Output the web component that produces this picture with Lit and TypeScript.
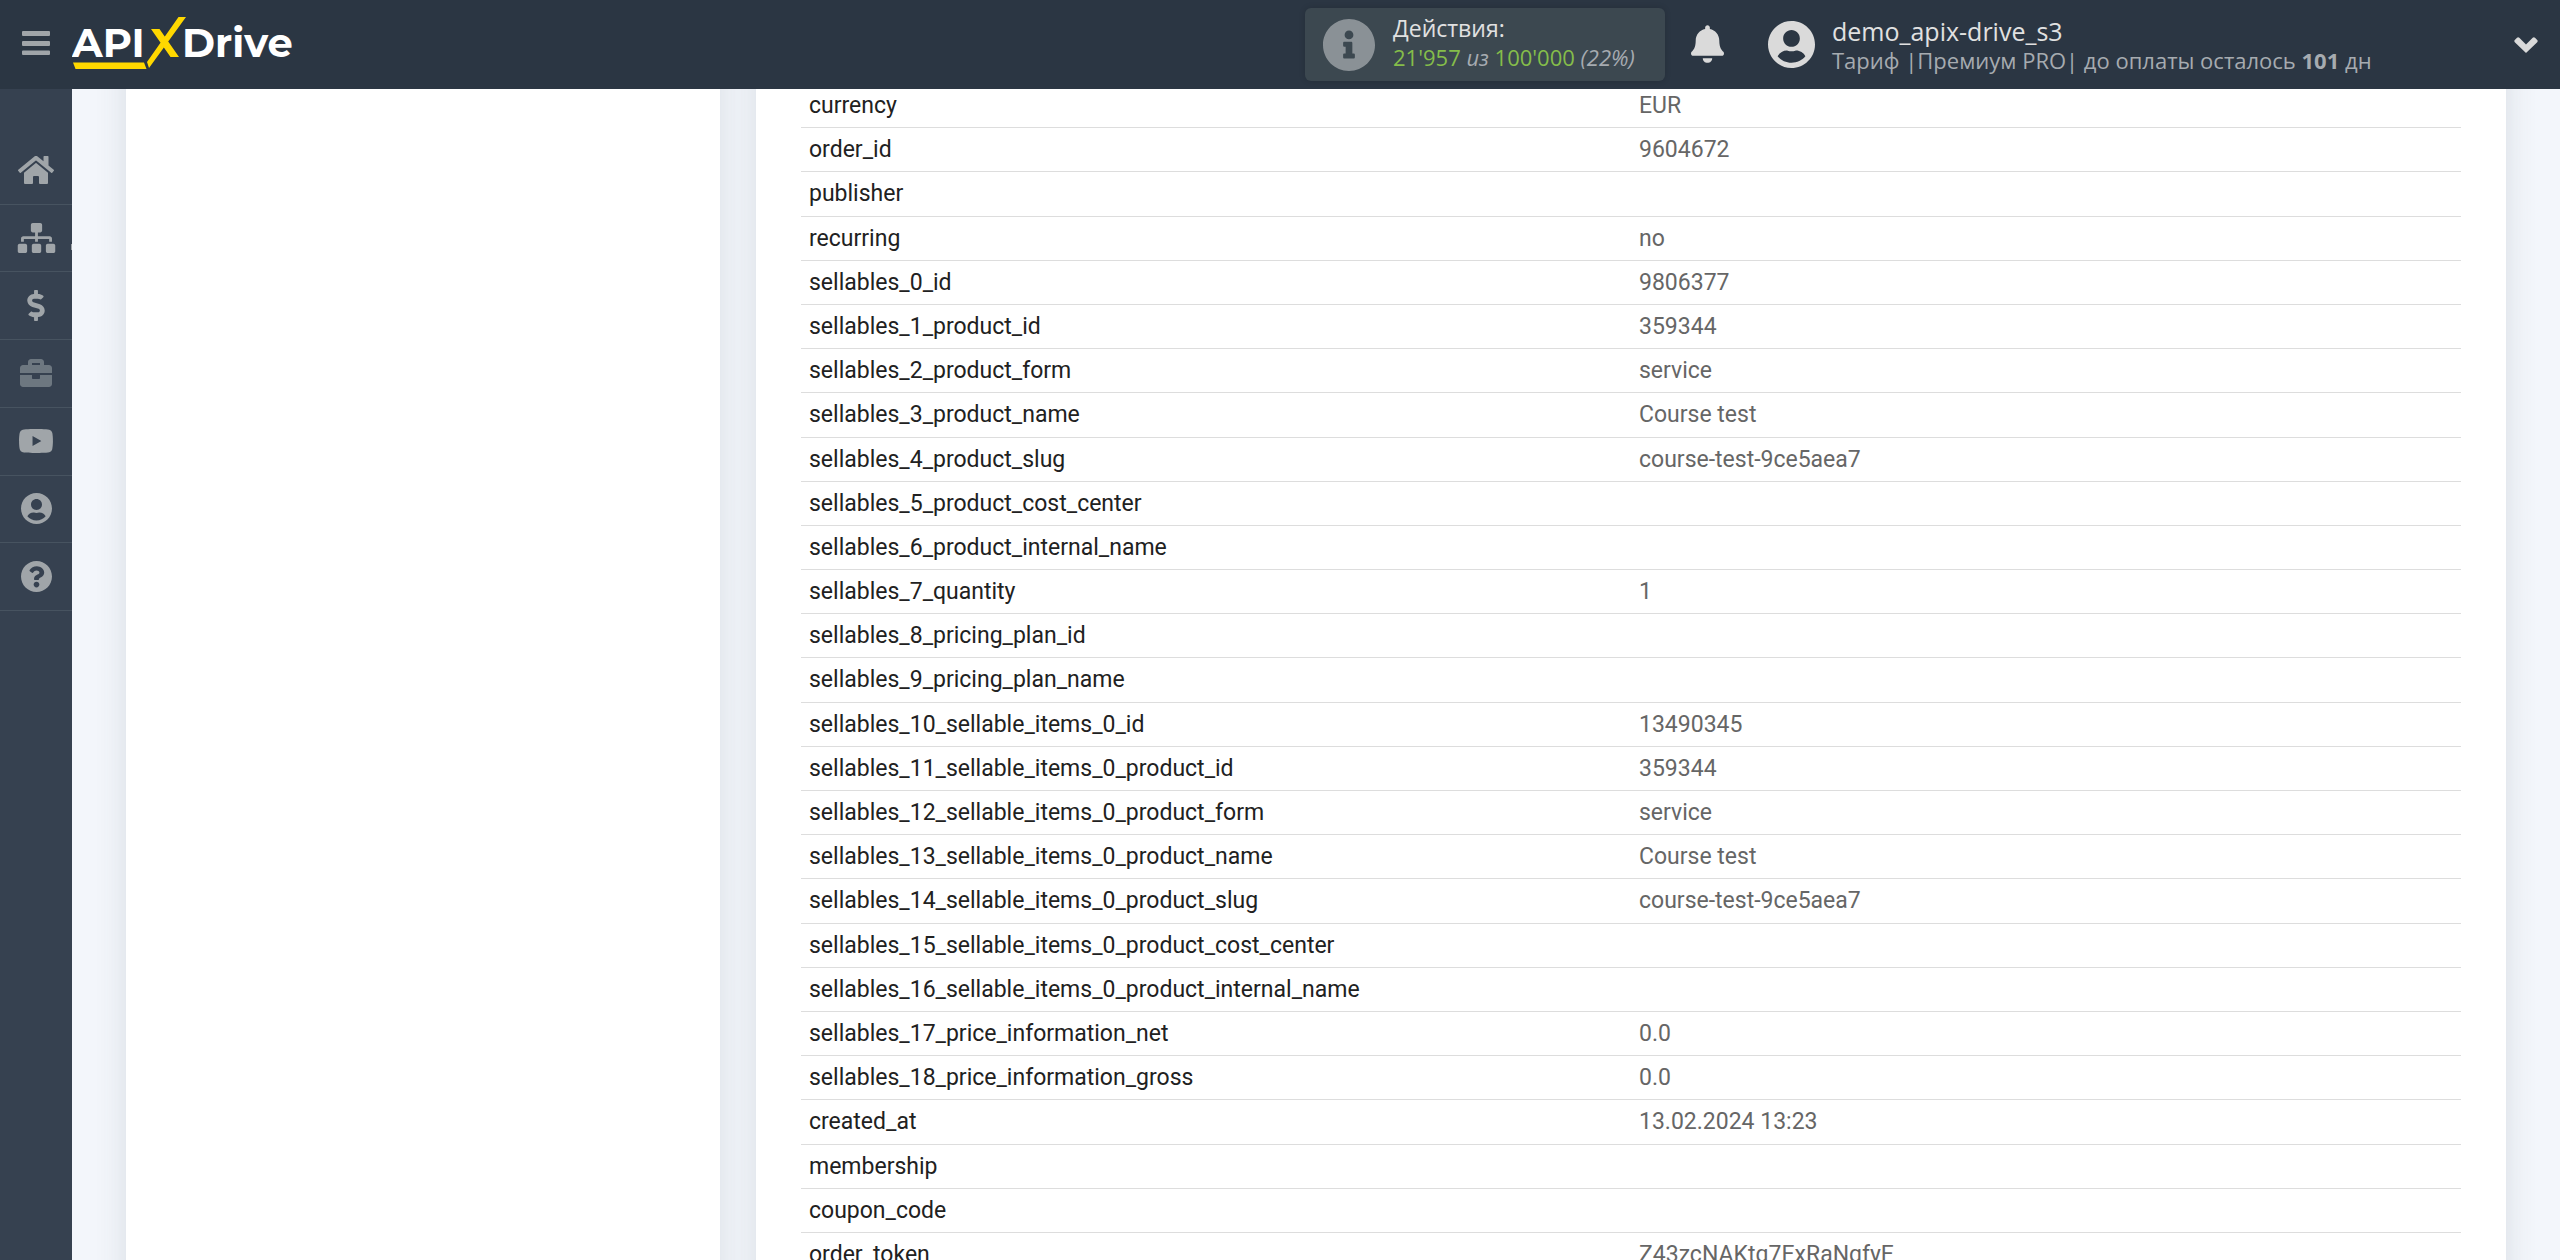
import { LitElement, html, css, svg } from "lit";
import { customElement } from "lit/decorators.js";

type Icon = { box: string; path: string };

const ICONS: Record<string, Icon> = {
  bars: {
    box: "0 0 28 24",
    path: "M1 0h26a1 1 0 0 1 1 1v3a1 1 0 0 1-1 1H1a1 1 0 0 1-1-1V1a1 1 0 0 1 1-1zM1 10h26a1 1 0 0 1 1 1v3a1 1 0 0 1-1 1H1a1 1 0 0 1-1-1v-3a1 1 0 0 1 1-1zM1 19.5h26a1 1 0 0 1 1 1v2.500a1 1 0 0 1-1 1H1a1 1 0 0 1-1-1v-2.500a1 1 0 0 1 1-1z",
  },
  info: {
    box: "8 8 496 496",
    path: "M256 8C119.043 8 8 119.083 8 256c0 136.997 111.043 248 248 248s248-111.003 248-248C504 119.083 392.957 8 256 8zm0 110c23.196 0 42 18.804 42 42s-18.804 42-42 42-42-18.804-42-42 18.804-42 42-42zm56 254c0 6.627-5.373 12-12 12h-88c-6.627 0-12-5.373-12-12v-24c0-6.627 5.373-12 12-12h12v-64h-12c-6.627 0-12-5.373-12-12v-24c0-6.627 5.373-12 12-12h64c6.627 0 12 5.373 12 12v100h12c6.627 0 12 5.373 12 12v24z",
  },
  bell: {
    box: "0 0 448 512",
    path: "M224 512c35.32 0 63.97-28.65 63.97-64H160.03c0 35.35 28.65 64 63.97 64zm215.39-149.71c-19.32-20.76-55.47-51.99-55.47-154.29 0-77.7-54.48-139.9-127.94-155.16V32c0-17.67-14.32-32-31.98-32s-31.98 14.33-31.98 32v20.84C118.56 68.1 64.08 130.3 64.08 208c0 102.3-36.15 133.53-55.47 154.29-6 6.45-8.66 14.16-8.61 21.71.11 16.4 12.98 32 32.1 32h383.8c19.12 0 32-15.6 32.1-32 .05-7.55-2.61-15.27-8.61-21.71z",
  },
  user: {
    box: "0 8 496 496",
    path: "M248 8C111 8 0 119 0 256s111 248 248 248 248-111 248-248S385 8 248 8zm0 96c48.6 0 88 39.4 88 88s-39.4 88-88 88-88-39.4-88-88 39.4-88 88-88zm0 344c-58.7 0-111.3-26.6-146.5-68.2 18.8-35.4 55.6-59.8 98.5-59.8 2.4 0 4.8.4 7.1 1.1 13 4.2 26.6 6.9 40.9 6.9 14.3 0 28-2.7 40.9-6.9 2.3-.7 4.700-1.100 7.100-1.100 42.900 0 79.700 24.400 98.500 59.800C359.300 421.400 306.700 448 248 448z",
  },
  chevron: {
    box: "0 0 24 16",
    path: "M12 16L.8 5.200a1.600 1.600 0 0 1 0-2.200L3 .8a1.600 1.600 0 0 1 2.300 0L12 7.500 18.700.8a1.600 1.600 0 0 1 2.300 0L23.200 3a1.600 1.600 0 0 1 0 2.200z",
  },
  home: {
    box: "0 32 576 448",
    path: "M280.37 148.26L96 300.11V464a16 16 0 0 0 16 16l112.06-.29a16 16 0 0 0 15.92-16V368a16 16 0 0 1 16-16h64a16 16 0 0 1 16 16v95.64a16 16 0 0 0 16 16.05L464 480a16 16 0 0 0 16-16V300L295.67 148.26a12.19 12.19 0 0 0-15.3 0zM571.6 251.47L488 182.56V44.05a12 12 0 0 0-12-12h-56a12 12 0 0 0-12 12v72.61L318.47 43a48 48 0 0 0-61 0L4.34 251.47a12 12 0 0 0-1.6 16.9l25.5 31A12 12 0 0 0 45.15 301l235.22-193.74a12.19 12.19 0 0 1 15.3 0L530.9 301a12 12 0 0 0 16.9-1.6l25.5-31a12 12 0 0 0-1.7-16.93z",
  },
  sitemap: {
    box: "0 0 640 512",
    path: "M128 352H32c-17.67 0-32 14.33-32 32v96c0 17.67 14.33 32 32 32h96c17.67 0 32-14.33 32-32v-96c0-17.67-14.33-32-32-32zm-24-80h192v48h48v-48h192v48h48v-57.59c0-21.17-17.23-38.41-38.41-38.41H344v-64h40c17.67 0 32-14.33 32-32V32c0-17.67-14.33-32-32-32H256c-17.67 0-32 14.33-32 32v96c0 17.67 14.33 32 32 32h40v64H94.41C73.23 224 56 241.23 56 262.41V320h48v-48zm264 80h-96c-17.67 0-32 14.33-32 32v96c0 17.67 14.33 32 32 32h96c17.67 0 32-14.33 32-32v-96c0-17.67-14.33-32-32-32zm240 0h-96c-17.67 0-32 14.33-32 32v96c0 17.67 14.33 32 32 32h96c17.67 0 32-14.33 32-32v-96c0-17.67-14.33-32-32-32z",
  },
  dollar: {
    box: "0 0 288 512",
    path: "M209.2 233.4l-108-31.6C88.7 198.2 80 186.5 80 173.5c0-16.3 13.2-29.5 29.5-29.5h66.3c12.2 0 24.2 3.7 34.2 10.5 6.1 4.1 14.3 3.1 19.5-2l34.8-34c7.1-6.9 6.1-18.4-1.8-24.5C238 74.8 207.4 64.1 176 64V16c0-8.8-7.2-16-16-16h-32c-8.8 0-16 7.2-16 16v48h-2.5C45.8 64-5.4 118.7.5 183.6c4.2 46.1 39.4 83.6 83.8 96.6l102.5 30c12.5 3.7 21.2 15.3 21.2 28.3 0 16.3-13.2 29.5-29.5 29.5h-66.3C100 368 88 364.3 78 357.5c-6.1-4.1-14.3-3.1-19.5 2l-34.8 34c-7.1 6.9-6.1 18.4 1.8 24.5 24.5 19.2 55.1 29.9 86.5 30v48c0 8.8 7.2 16 16 16h32c8.8 0 16-7.2 16-16v-48.2c46.6-.9 90.3-28.6 105.7-72.7 21.5-61.6-14.6-124.8-72.5-141.7z",
  },
  briefcase: {
    box: "0 32 512 448",
    path: "M320 336c0 8.84-7.16 16-16 16h-96c-8.84 0-16-7.16-16-16v-48H0v144c0 25.6 22.4 48 48 48h416c25.6 0 48-22.4 48-48V288H320v48zm144-208h-80V80c0-25.6-22.4-48-48-48H176c-25.6 0-48 22.4-48 48v48H48c-25.6 0-48 22.4-48 48v80h512v-80c0-25.6-22.4-48-48-48zm-144 0H192V96h128v32z",
  },
  video: {
    box: "14 64 548 384",
    path: "M549.655 124.083c-6.281-23.65-24.787-42.276-48.284-48.597C458.781 64 288 64 288 64S117.22 64 74.629 75.486c-23.497 6.322-42.003 24.947-48.284 48.597-11.412 42.867-11.412 132.305-11.412 132.305s0 89.438 11.412 132.305c6.281 23.65 24.787 41.5 48.284 47.821C117.22 448 288 448 288 448s170.78 0 213.371-11.486c23.497-6.321 42.003-24.171 48.284-47.821 11.412-42.867 11.412-132.305 11.412-132.305s0-89.438-11.412-132.305zm-317.51 213.508V175.185l142.739 81.205-142.739 81.201z",
  },
  question: {
    box: "8 8 496 496",
    path: "M504 256c0 136.997-111.043 248-248 248S8 392.997 8 256C8 119.083 119.043 8 256 8s248 111.083 248 248zM262.655 90c-54.497 0-89.255 22.957-116.549 63.758-3.536 5.286-2.353 12.415 2.715 16.258l34.699 26.31c5.205 3.947 12.621 3.008 16.665-2.122 17.864-22.658 30.113-35.797 57.303-35.797 20.429 0 45.698 13.148 45.698 32.958 0 14.976-12.363 22.667-32.534 33.976C247.128 238.528 216 254.941 216 296v4c0 6.627 5.373 12 12 12h56c6.627 0 12-5.373 12-12v-1.333c0-28.462 83.186-29.647 83.186-106.667 0-58.002-60.165-102-116.531-102zM256 338c-25.365 0-46 20.635-46 46 0 25.364 20.635 46 46 46s46-20.636 46-46c0-25.365-20.635-46-46-46z",
  },
};

const icon = (name: string, width: number, height: number) => html`
  <svg class="icon" viewBox=${ICONS[name].box} width=${width} height=${height} aria-hidden="true">
    ${svg`<path d=${ICONS[name].path}></path>`}
  </svg>
`;

const MENU = [
  { icon: "home", label: "Главная", width: 36, height: 28 },
  { icon: "sitemap", label: "Связи", width: 39, height: 30, mark: true },
  { icon: "dollar", label: "Оплата", width: 18, height: 31 },
  { icon: "briefcase", label: "Услуги", width: 32, height: 28, dim: true },
  { icon: "video", label: "Видео", width: 34, height: 24 },
  { icon: "user", label: "Профиль", width: 31, height: 31 },
  { icon: "question", label: "Помощь", width: 31, height: 31 },
];

const FIELDS: [string, string][] = [
  ["currency", "EUR"],
  ["order_id", "9604672"],
  ["publisher", ""],
  ["recurring", "no"],
  ["sellables_0_id", "9806377"],
  ["sellables_1_product_id", "359344"],
  ["sellables_2_product_form", "service"],
  ["sellables_3_product_name", "Course test"],
  ["sellables_4_product_slug", "course-test-9ce5aea7"],
  ["sellables_5_product_cost_center", ""],
  ["sellables_6_product_internal_name", ""],
  ["sellables_7_quantity", "1"],
  ["sellables_8_pricing_plan_id", ""],
  ["sellables_9_pricing_plan_name", ""],
  ["sellables_10_sellable_items_0_id", "13490345"],
  ["sellables_11_sellable_items_0_product_id", "359344"],
  ["sellables_12_sellable_items_0_product_form", "service"],
  ["sellables_13_sellable_items_0_product_name", "Course test"],
  ["sellables_14_sellable_items_0_product_slug", "course-test-9ce5aea7"],
  ["sellables_15_sellable_items_0_product_cost_center", ""],
  ["sellables_16_sellable_items_0_product_internal_name", ""],
  ["sellables_17_price_information_net", "0.0"],
  ["sellables_18_price_information_gross", "0.0"],
  ["created_at", "13.02.2024 13:23"],
  ["membership", ""],
  ["coupon_code", ""],
  ["order_token", "Z43zcNAKtq7ExRaNgfyE"],
];

@customElement("app-header")
export class AppHeader extends LitElement {
  static styles = css`
    :host {
      display: grid;
      grid-template-columns: 1305fr 1255fr;
      align-items: center;
      height: 89px;
      background: #2b3643;
      font-family: "Open Sans", "Noto Sans", sans-serif;
      color: #e1e1e1;
    }
    .icon {
      display: block;
      fill: currentColor;
      flex: none;
    }
    button {
      display: block;
      padding: 0;
      border: 0;
      background: none;
      color: #dadada;
      cursor: pointer;
    }
    .brand,
    .tools {
      display: flex;
      align-items: center;
    }
    .brand {
      gap: 22px;
      padding: 0 0 4px 22px;
    }
    .brand .toggle {
      color: #a0a5a9;
    }
    .logo {
      display: block;
    }
    .word {
      font-family: "Montserrat", "Inter", sans-serif;
      font-weight: 700;
      font-size: 40px;
      fill: #fff;
    }
    .mark {
      fill: #ffd800;
    }
    .tools {
      padding-right: 22px;
    }
    .usage {
      box-sizing: border-box;
      display: flex;
      align-items: center;
      gap: 18px;
      width: 360px;
      height: 73px;
      padding-left: 18px;
      border-radius: 6px;
      background: #3c4850;
      box-shadow: 0 0 6px rgba(0, 0, 0, 0.15);
    }
    .usage .icon {
      color: #8a9196;
    }
    .usage .text {
      padding-bottom: 6px;
    }
    p {
      margin: 0;
      white-space: nowrap;
    }
    .title {
      font-size: 23px;
      line-height: 30px;
    }
    .user .title {
      font-size: 25px;
    }
    .detail {
      font-size: 22px;
      line-height: 28px;
      color: #a6abb0;
    }
    .count {
      color: #85bd4a;
    }
    .bell {
      margin: 0 44px 2px 26px;
    }
    .user {
      flex: 1;
      display: flex;
      align-items: center;
      gap: 17px;
    }
    .user .icon {
      color: #dadada;
    }
  `;

  render() {
    return html`
      <div class="brand">
        <button class="toggle" aria-label="Меню">${icon("bars", 28, 24)}</button>
        <a href="#" aria-label="APIXDrive">
          <svg class="logo" width="222" height="56" viewBox="72 14 222 56">
            <text class="word" x="72" y="56">API</text>
            <text class="word" x="182" y="56">Drive</text>
            <path class="mark" d="M73 61.500H144L146.500 68H75.500ZM178.500 16H186L149 67L147 61ZM151 28H159.500L179 56H170.500Z"></path>
          </svg>
        </a>
      </div>
      <div class="tools">
        <div class="usage">
          ${icon("info", 52, 52)}
          <div class="text">
            <p class="title">Действия:</p>
            <p class="detail">
              <span class="count">21'957</span> <i>из</i> <span class="count">100'000</span> <i>(22%)</i>
            </p>
          </div>
        </div>
        <button class="bell" aria-label="Уведомления">${icon("bell", 33, 38)}</button>
        <div class="user">
          ${icon("user", 47, 47)}
          <div>
            <p class="title">demo_apix-drive_s3</p>
            <p class="detail">Тариф |Премиум PRO| до оплаты осталось <b>101</b> дн</p>
          </div>
        </div>
        <button aria-label="Открыть меню профиля">${icon("chevron", 24, 16)}</button>
      </div>
    `;
  }
}

@customElement("app-sidebar")
export class AppSidebar extends LitElement {
  static styles = css`
    :host {
      display: block;
      box-sizing: border-box;
      padding-top: 48px;
      background: #364150;
    }
    nav {
      display: grid;
      grid-template-rows: repeat(7, 1fr);
      height: 474px;
    }
    .item {
      position: relative;
      display: grid;
      place-items: center;
      border-bottom: 1px solid #475360;
      color: #a0a5a9;
    }
    .dim {
      color: #6d7780;
    }
    .marked::after {
      content: "";
      position: absolute;
      right: 0;
      bottom: 21px;
      width: 1px;
      height: 6px;
      background: #a0a5a9;
    }
    .icon {
      display: block;
      fill: currentColor;
    }
  `;

  render() {
    return html`
      <nav>
        ${MENU.map(
          (m) => html`
            <a class="item ${m.dim ? "dim" : ""} ${m.mark ? "marked" : ""}" href="#" aria-label=${m.label}>
              ${icon(m.icon, m.width, m.height)}
            </a>
          `
        )}
      </nav>
    `;
  }
}

@customElement("field-table")
export class FieldTable extends LitElement {
  static styles = css`
    :host {
      display: block;
    }
    table {
      width: 100%;
      table-layout: fixed;
      border-spacing: 0;
      font-family: "Roboto", sans-serif;
      font-size: 23px;
      line-height: 1.4;
    }
    th,
    td {
      padding: 6px 8px 5px;
      border-bottom: 1px solid #ddd;
      font-weight: 400;
      text-align: left;
      vertical-align: top;
    }
    th {
      color: #212121;
    }
    td {
      color: #666;
    }
    td:empty::before {
      content: "\\00a0";
    }
  `;

  render() {
    return html`
      <table>
        <tbody>
          ${FIELDS.map(([name, value]) => html`<tr><th scope="row">${name}</th><td>${value}</td></tr>`)}
        </tbody>
      </table>
    `;
  }
}

@customElement("app-root")
export class AppRoot extends LitElement {
  static styles = css`
    :host {
      display: grid;
      grid-template: auto minmax(0, 1fr) / 72px minmax(0, 1fr);
      height: 100vh;
      overflow: hidden;
      background: #f3f6fb;
    }
    app-header {
      grid-column: 1 / -1;
      z-index: 1;
    }
    main {
      display: grid;
      grid-template-columns: minmax(0, 297fr) minmax(0, 875fr);
      gap: 36px;
      padding: 0 54px;
      overflow: hidden;
    }
    /* The cards run on above and below the visible part of the page. */
    .card {
      margin: -40px 0;
      background: #fff;
      box-shadow: 0 0 30px rgba(60, 70, 80, 0.14);
    }
    .data {
      box-sizing: border-box;
      padding: 35px 45px 0;
    }
  `;

  render() {
    return html`
      <app-header></app-header>
      <app-sidebar></app-sidebar>
      <main>
        <aside class="card"></aside>
        <section class="card data"><field-table></field-table></section>
      </main>
    `;
  }
}
